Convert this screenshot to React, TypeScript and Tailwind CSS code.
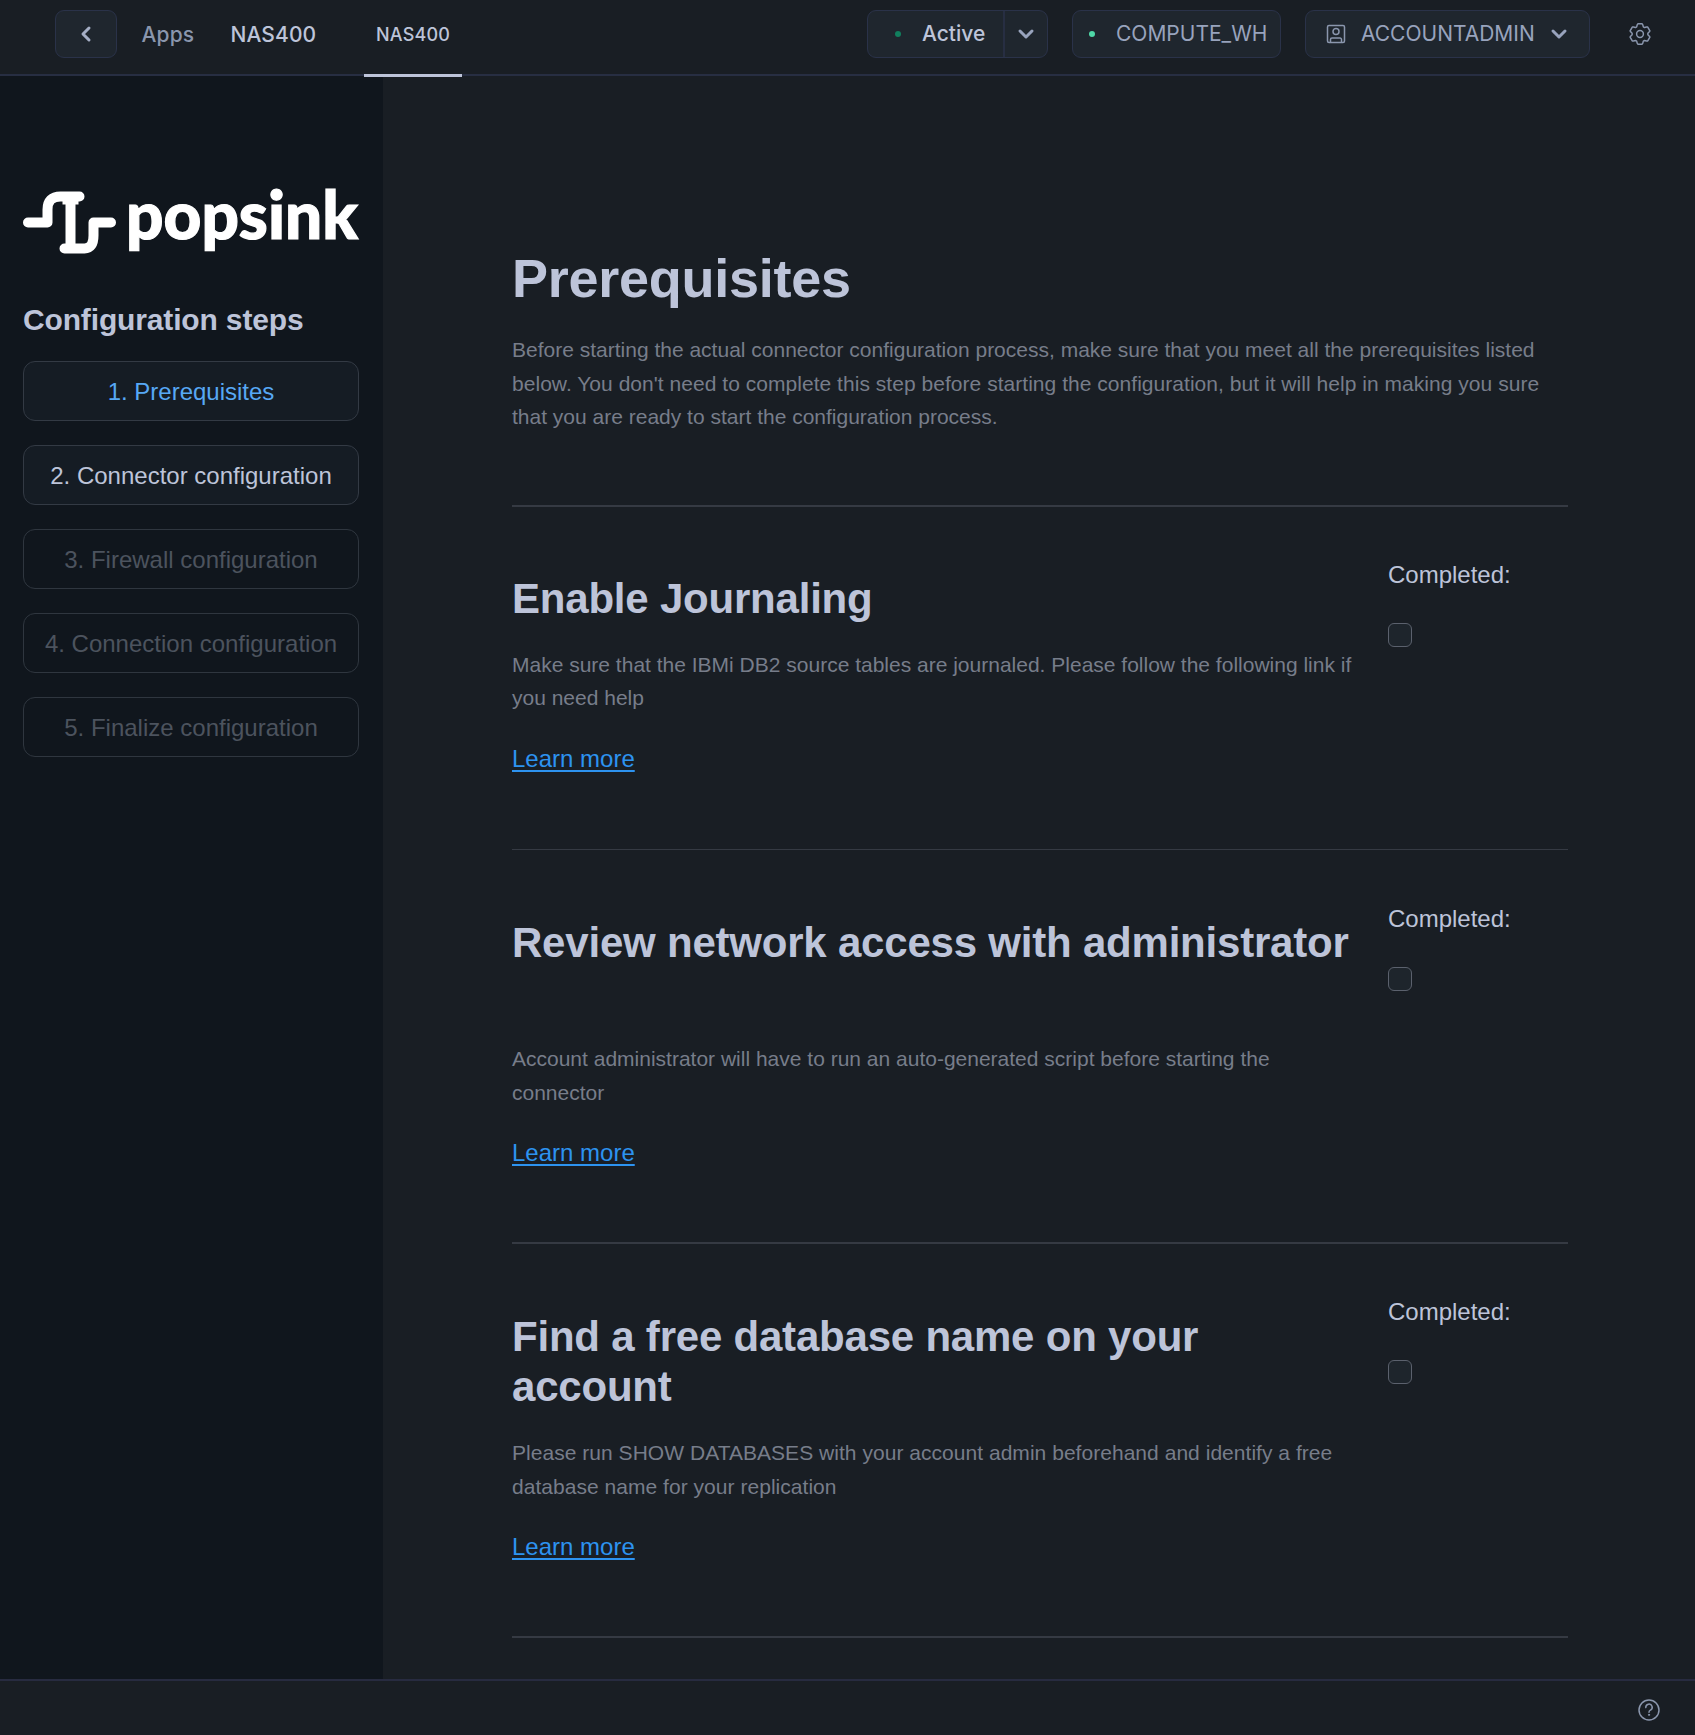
import React from "react";

const steps = [
  { label: "1. Prerequisites", style: "text-[#57a8f5] bg-[#151c24] border-[#333a44]" },
  { label: "2. Connector configuration", style: "text-[#bdc4d9] bg-[#151c24] border-[#333a44]" },
  { label: "3. Firewall configuration", style: "text-[#4c535e] border-[#2f363f]" },
  { label: "4. Connection configuration", style: "text-[#4c535e] border-[#2f363f]" },
  { label: "5. Finalize configuration", style: "text-[#4c535e] border-[#2f363f]" },
];

// Outline of a six-toothed gear centred on (11, 11).
const gearPoints = [0, 60, 120, 180, 240, 300]
  .flatMap((a) => [[a - 25, 7.9], [a - 17, 9.6], [a - 12, 10.4], [a + 12, 10.4], [a + 17, 9.6], [a + 25, 7.9]])
  .map(([a, r]) => {
    const t = (a * Math.PI) / 180;
    return `${(11 + r * Math.sin(t)).toFixed(2)},${(11 - r * Math.cos(t)).toFixed(2)}`;
  })
  .join(" ");

function Chevron() {
  return (
    <svg width="18" height="12" viewBox="0 0 18 12" fill="none" stroke="#98a3bd" strokeWidth="3" strokeLinecap="round" strokeLinejoin="round">
      <path d="M3 3l6 6 6-6" />
    </svg>
  );
}

function Logo() {
  return (
    <svg className="block" width="338" height="100" viewBox="23 170 338 100" fill="none">
      <g stroke="#fff" strokeWidth="10" strokeLinecap="round" strokeLinejoin="round">
        <path d="M28 222.500h19.500v-13q0-13 13-13h19" />
        <path d="M64.500 248.500h20q9 0 9-13v-13h17.500" />
        <path d="M70.500 200v46" strokeLinecap="butt" />
      </g>
      <path d="M62.500 201h16v3.500h-16z" fill="#fff" />
      <text x="126" y="239" fontFamily="Lato" fontWeight="900" fontSize="66" fill="#fff" stroke="#fff" strokeWidth="1.200" textLength="232" lengthAdjust="spacingAndGlyphs">popsink</text>
    </svg>
  );
}

type SectionProps = { title: string[]; text: string[]; headingHeight: string; rule: string; left: string; right: string; textSpacing?: string };

function Section({ title, text, headingHeight, rule, left, right, textSpacing = "" }: SectionProps) {
  return (
    <section className={"flex border-[#353a43] " + rule}>
      <div className={"w-[876px] shrink-0 " + left}>
        <h2 className={"text-[42px] leading-[50.4px] font-bold tracking-[-0.21px] text-[#bdc4d9] whitespace-nowrap " + headingHeight}>
          {title.map((t) => <div key={t}>{t}</div>)}
        </h2>
        <p className={"mt-[23.200px] text-[21px] leading-[33.6px] text-[#777d8a] whitespace-nowrap " + textSpacing}>
          {text.map((t) => <span className="block" key={t}>{t}</span>)}
        </p>
        <a className="mt-[24.800px] block text-[24px] leading-[38.4px] text-[#2d93f0] underline underline-offset-[3px] decoration-[1.5px]">Learn more</a>
      </div>
      <div className={right}>
        <div className="text-[24px] leading-[38.4px] text-[#bdc4d9]">Completed:</div>
        <div className="mt-[28.600px] size-6 rounded-[6px] border-[1.500px] border-[#5b616d] bg-[#1e252c]" />
      </div>
    </section>
  );
}

export default function App() {
  return (
    <div className="flex h-[1735px] w-[1695px] flex-col overflow-hidden bg-[#191e24] font-['Liberation_Sans',sans-serif]">
      <header className="relative z-10 flex h-[76px] shrink-0 border-b-2 border-[#272e42] pt-[10px] font-['Inter',sans-serif] text-[21px] leading-[48px] font-medium">
        <div className="ml-[55px] flex h-12 w-[62px] items-center justify-center rounded-[9px] border border-[#2a3249] bg-[#1f262e]">
          <svg width="12" height="18" viewBox="0 0 12 18" fill="none" stroke="#a5aec5" strokeWidth="3" strokeLinecap="round" strokeLinejoin="round"><path d="M9 3L3 9l6 6" /></svg>
        </div>
        <div className="ml-[24.500px] w-[89px] pt-px tracking-[0.15px] text-[#8a96ad]">Apps</div>
        <div className="w-[133.500px] pt-px tracking-[0.1px] text-[#bdc4d9]">NAS400</div>
        <div className="-mb-[2.500px] flex w-[98px] justify-center border-b-3 border-[#bdc4d9] pt-px text-[18px] tracking-[0.15px] text-[#bdc4d9]">NAS400</div>
        <div className="ml-[405px] flex h-12 w-[181px] items-center rounded-[9px] border border-[#2a3249] bg-[#1f262e]">
          <span className="ml-[27px] size-[6px] rounded-full bg-[#117f5e]" />
          <span className="ml-[21px] w-[81px] leading-[46px] text-[#bdc4d9]">Active</span>
          <span className="flex h-full flex-1 items-center justify-center border-l-2 border-[#272e42]"><Chevron /></span>
        </div>
        <div className="ml-6 flex h-12 w-[209px] items-center rounded-[9px] border border-[#2a3249] bg-[#1f262e] font-normal text-[#98a3bd]">
          <span className="ml-4 size-[6px] rounded-full bg-[#4fd8a8]" />
          <span className="ml-[21px] leading-[46px]">COMPUTE_WH</span>
        </div>
        <div className="ml-6 flex h-12 w-[285px] items-center rounded-[9px] border border-[#2a3249] bg-[#1f262e] font-normal text-[#98a3bd]">
          <svg className="ml-[20px]" width="20" height="20" viewBox="0 0 20 20" fill="none" stroke="#8a96ad" strokeWidth="1.500">
            <rect x="1.500" y="1.500" width="17" height="17" rx="1.500" />
            <circle cx="10" cy="7.500" r="3" />
            <path d="M4.500 18v-2.500a1.500 1.500 0 0 1 1.500-1.500h8a1.500 1.500 0 0 1 1.500 1.500V18" />
          </svg>
          <span className="ml-[15px] w-[189px] leading-[46px]">ACCOUNTADMIN</span>
          <Chevron />
        </div>
        <svg className="mt-[12.500px] ml-[39px]" width="22" height="22" viewBox="0 0 22 22" fill="none" stroke="#8a96ad" strokeWidth="1.500" strokeLinejoin="round">
          <circle cx="11" cy="11" r="3.400" />
          <polygon points={gearPoints} />
        </svg>
      </header>
      <div className="flex min-h-0 flex-1">
        <aside className="w-[383px] shrink-0 bg-[#10161d] px-[23px] pt-[94px]">
          <Logo />
          <h3 className="mt-8 text-[30px] leading-9 font-bold tracking-[-0.15px] whitespace-nowrap text-[#bdc4d9]">Configuration steps</h3>
          <nav className="mt-[23px] flex w-[336px] flex-col gap-6">
            {steps.map((s) => (
              <div key={s.label} className={"flex h-[60px] items-center justify-center rounded-xl border-[1.500px] pt-px text-[24px] whitespace-nowrap " + s.style}>{s.label}</div>
            ))}
          </nav>
        </aside>
        <main className="ml-[129px] w-[1056px] shrink-0 pt-[170px]">
          <h1 className="text-[54px] leading-[64.8px] font-bold tracking-[-0.27px] text-[#bdc4d9]">Prerequisites</h1>
          <p className="mt-[22.200px] h-[172px] text-[21px] leading-[33.6px] whitespace-nowrap text-[#777d8a]">
            <span className="block">Before starting the actual connector configuration process, make sure that you meet all the prerequisites listed</span>
            <span className="block tracking-[0.035px]">below. You don't need to complete this step before starting the configuration, but it will help in making you sure</span>
            <span className="block">that you are ready to start the configuration process.</span>
          </p>
          <Section title={["Enable Journaling"]} text={["Make sure that the IBMi DB2 source tables are journaled. Please follow the following link if", "you need help"]} headingHeight="h-[50.4px]" rule="h-[344px] border-t-2" left="pt-[67px]" right="pt-[49px]" />
          <Section title={["Review network access with administrator"]} text={["Account administrator will have to run an auto-generated script before starting the", "connector"]} headingHeight="h-[100.8px]" rule="h-[393px] border-t" left="pt-[68px]" right="pt-[50px]" />
          <Section title={["Find a free database name on your", "account"]} text={["Please run SHOW DATABASES with your account admin beforehand and identify a free", "database name for your replication"]} textSpacing="tracking-[0.035px]" headingHeight="h-[100.8px]" rule="h-[394px] border-t-2" left="pt-[68px]" right="pt-[49px]" />
          <div className="h-[2px] bg-[#353a43]" />
        </main>
      </div>
      <footer className="flex h-[56px] shrink-0 justify-end border-t-2 border-[#272b40] pt-[17.500px] pr-[35px]">
        <svg width="22" height="22" viewBox="0 0 22 22" fill="none" stroke="#8a96ad" strokeWidth="1.500" strokeLinecap="round">
          <circle cx="11" cy="11" r="10" />
          <path d="M7.800 8.600a3.200 3.200 0 1 1 4.600 2.600c-.9.500-1.400 1-1.400 2" />
          <circle cx="11" cy="15.800" r=".6" fill="#8a96ad" strokeWidth="1" />
        </svg>
      </footer>
    </div>
  );
}
